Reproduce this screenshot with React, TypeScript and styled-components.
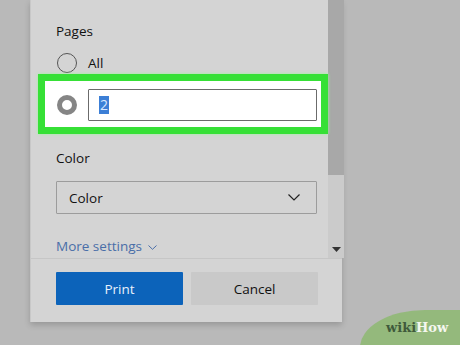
import styled, { createGlobalStyle } from 'styled-components'

const GlobalStyle = createGlobalStyle`
    html, body {
        margin: 0;
        padding: 0;
        background: #b9b9b9;
    }
    body {
        font-family: "Open Sans", "Noto Sans", Arial, sans-serif;
    }
`

export default function App() {
    return (
        <Screen>
            <GlobalStyle />
            <Dialog>
                <Body>
                    <Scroller>
                        <Label>Pages</Label>
                        <RadioRow>
                            <Radio />
                            <RadioText>All</RadioText>
                        </RadioRow>
                        <Highlight>
                            <Radio $checked />
                            <RangeInput>
                                <Selected>2</Selected>
                            </RangeInput>
                        </Highlight>
                        <Label $top={15}>Color</Label>
                        <Select>
                            <span>Color</span>
                            <svg width="12" height="7" viewBox="0 0 12 7" fill="none">
                                <path d="M0.5 0.5 L6 6 L11.5 0.5" stroke="#222" strokeWidth="1.2" />
                            </svg>
                        </Select>
                        <MoreLink>
                            More settings
                            <svg width="9" height="5" viewBox="0 0 9 5" fill="none">
                                <path d="M0.5 0.5 L4.5 4.3 L8.5 0.5" stroke="#4a6ea8" strokeWidth="1" />
                            </svg>
                        </MoreLink>
                    </Scroller>
                    <ScrollBar>
                        <Thumb />
                        <svg width="9" height="5" viewBox="0 0 9 5">
                            <path d="M0 0 H9 L4.5 5 Z" fill="#333" />
                        </svg>
                    </ScrollBar>
                </Body>
                <Footer>
                    <Button $primary>Print</Button>
                    <Button>Cancel</Button>
                </Footer>
            </Dialog>
            <Watermark>
                <em>wiki</em>How
            </Watermark>
        </Screen>
    )
}

/*___Styling___*/

const Screen = styled.div`
    position: relative;
    width: 460px;
    height: 345px;
    overflow: hidden;
    background: #b9b9b9;
`

const Dialog = styled.div`
    margin-left: 30px;
    width: 312px;
    height: 322px;
    display: flex;
    flex-direction: column;
    background: #d4d4d4;
    border-left: 1px solid #c8c8c8;
    box-sizing: border-box;
    box-shadow: 0 3px 6px rgba(0, 0, 0, 0.18);
`

const Body = styled.div`
    display: flex;
    height: 259px;
    border-bottom: 1px solid #c6c6c6;
    box-sizing: border-box;
`

const Scroller = styled.div`
    flex: 1;
    padding: 22px 0 0 25px;
    display: flex;
    flex-direction: column;
    align-items: flex-start;
`

const Label = styled.div<{ $top?: number }>`
    margin-top: ${p => p.$top ?? 0}px;
    font-size: 13.5px;
    line-height: 19px;
    color: #111;
`

const RadioRow = styled.div`
    display: flex;
    align-items: center;
    gap: 11px;
    margin-top: 12px;
    height: 20px;
    padding-left: 1px;
`

const Radio = styled.span<{ $checked?: boolean }>`
    width: 20px;
    height: 20px;
    flex: none;
    border-radius: 50%;
    box-sizing: border-box;
    border: ${p => (p.$checked ? '5px solid #858585' : '1px solid #555')};
    background: ${p => (p.$checked ? '#fff' : 'transparent')};
`

const RadioText = styled.span`
    font-size: 13.5px;
    color: #111;
`

const Highlight = styled.div`
    margin: 1px 0 0 -18px;
    width: 290px;
    height: 60px;
    box-sizing: border-box;
    border: 7px solid #36e036;
    box-shadow: 0 0 3px #9df59d;
    background: #fff;
    display: flex;
    align-items: center;
    gap: 11px;
    padding: 2px 4px 0 12px;
    position: relative;
    z-index: 1;
`

const RangeInput = styled.div`
    flex: 1;
    height: 32px;
    box-sizing: border-box;
    border: 1.5px solid #6b6b6b;
    border-radius: 1px;
    display: flex;
    align-items: center;
    padding-left: 10px;
`

const Selected = styled.span`
    background: #3c7fd6;
    color: #d9e8ff;
    font-size: 14px;
    line-height: 18px;
    padding: 0 1px;
`

const Select = styled.div`
    margin-top: 13px;
    width: 261px;
    height: 33px;
    box-sizing: border-box;
    border: 1px solid #9c9c9c;
    border-radius: 1px;
    display: flex;
    align-items: center;
    justify-content: space-between;
    padding: 0 16px 0 12px;
    font-size: 13.5px;
    color: #111;
`

const MoreLink = styled.div`
    margin-top: 23px;
    display: flex;
    align-items: center;
    gap: 6px;
    font-size: 13.5px;
    color: #4a6ea8;

    svg {
        margin-top: 3px;
    }
`

const ScrollBar = styled.div`
    width: 16px;
    background: #cbcbcb;
    display: flex;
    flex-direction: column;
    align-items: center;
    justify-content: space-between;
    padding-bottom: 6px;
    box-sizing: border-box;
`

const Thumb = styled.div`
    width: 16px;
    height: 175px;
    background: #a8a8a8;
`

const Footer = styled.div`
    flex: 1;
    display: flex;
    gap: 8px;
    padding: 13px 0 0 25px;
`

const Button = styled.div<{ $primary?: boolean }>`
    width: 127px;
    height: 33px;
    display: flex;
    align-items: center;
    justify-content: center;
    font-size: 13.5px;
    border-radius: 1px;
    background: ${p => (p.$primary ? '#0c63ba' : '#c9c9c9')};
    color: ${p => (p.$primary ? '#e9f1fb' : '#111')};
`

const Watermark = styled.div`
    position: absolute;
    right: -30px;
    bottom: -40px;
    width: 130px;
    height: 75px;
    border-radius: 50% 0 0 0;
    background: #94b97c;
    box-sizing: border-box;
    padding: 10px 0 0 26px;
    font-family: "DejaVu Serif", "Liberation Serif", serif;
    font-weight: bold;
    font-size: 13px;
    color: #f4f7f0;

    em {
        font-style: normal;
        color: #3f5a3b;
    }
`
